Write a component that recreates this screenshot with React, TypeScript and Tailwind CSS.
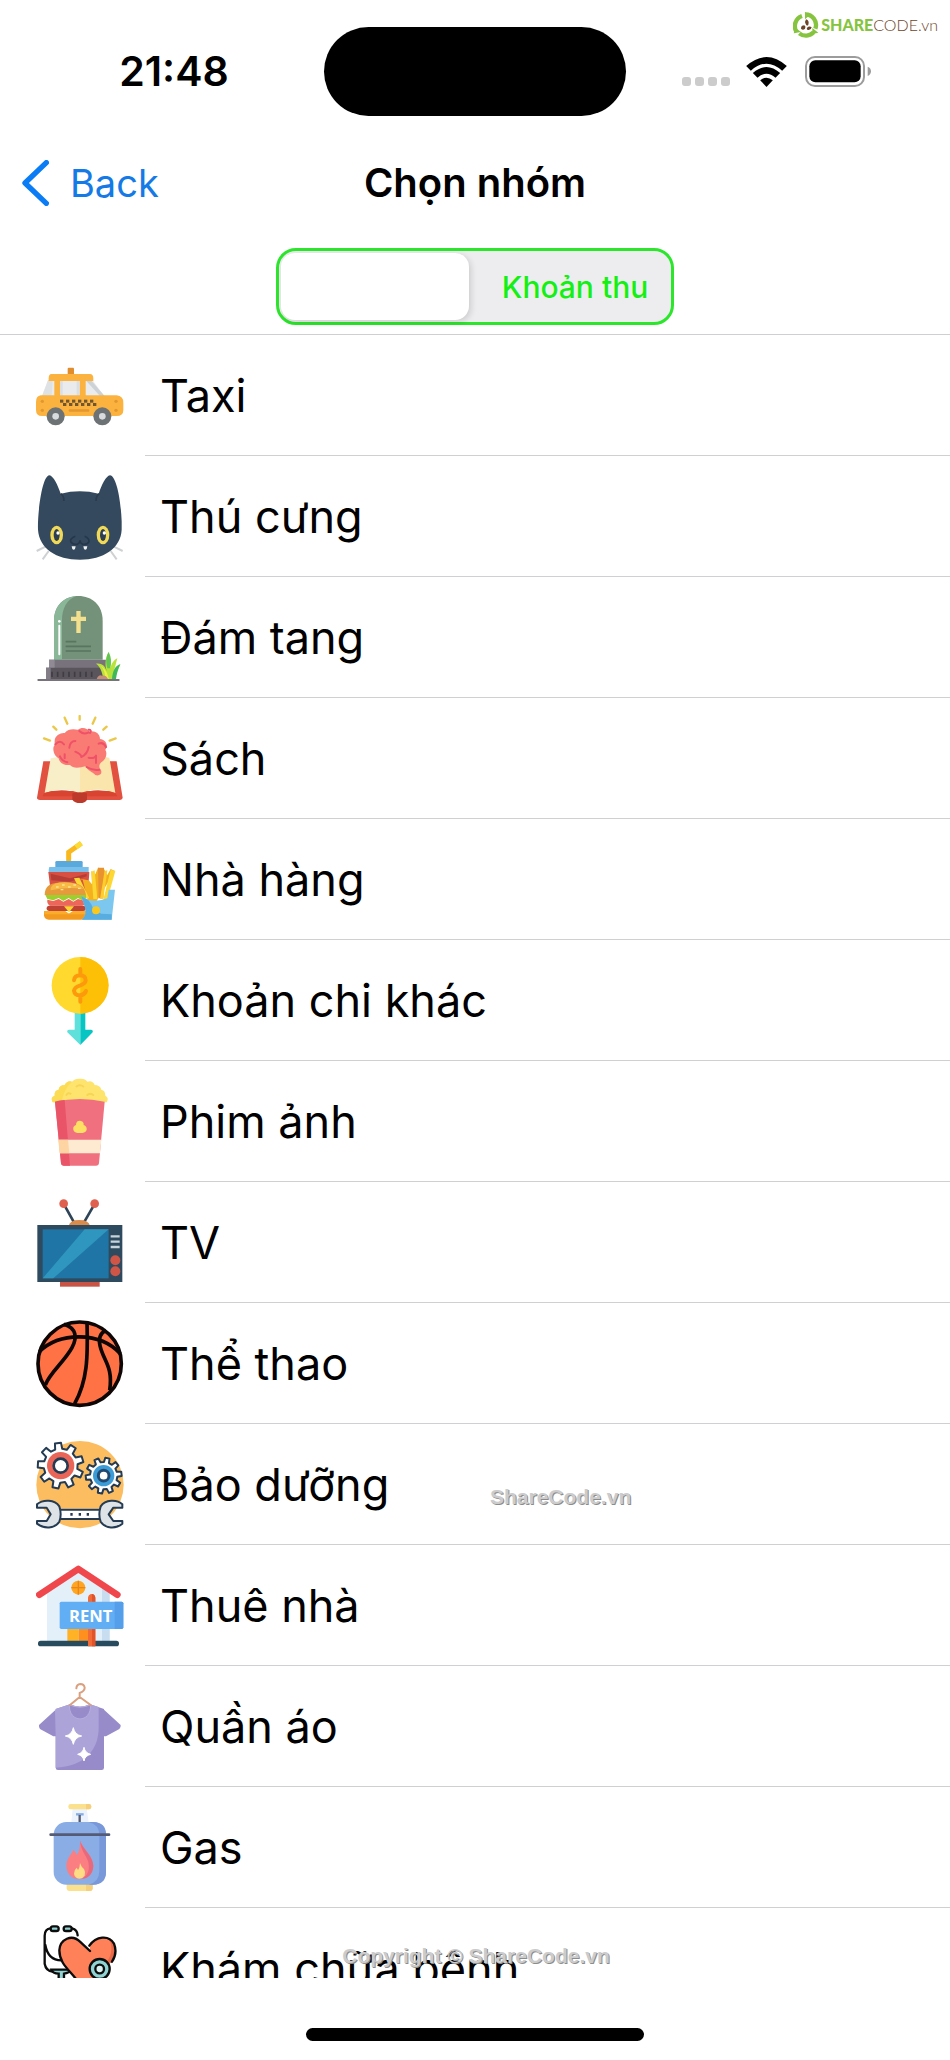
import React, { type ReactNode } from "react";

function gearPath(cx: number, cy: number, outer: number, inner: number, teeth: number, turn: number) {
  const step = (Math.PI * 2) / teeth;
  const points: string[] = [];
  for (let i = 0; i < teeth; i++) {
    const mid = turn + i * step;
    const corners: [number, number][] = [
      [inner, -0.3],
      [outer, -0.19],
      [outer, 0.19],
      [inner, 0.3],
    ];
    for (const [r, f] of corners) {
      const a = mid + f * step;
      points.push(`${(cx + r * Math.cos(a)).toFixed(1)} ${(cy + r * Math.sin(a)).toFixed(1)}`);
    }
  }
  return `M${points.join("L")}Z`;
}

function Icon({ box, children }: { box: string; children: ReactNode }) {
  return (
    <svg viewBox={box} className="size-[88px] shrink-0" aria-hidden="true">
      {children}
    </svg>
  );
}

const Taxi = () => (
  <Icon box="48 33 264 264">
    <rect x="143" y="80" width="19" height="24" rx="3" fill="#e08e2d" />
    <path d="M66 165L84 118H218L252 165Z" fill="#e9ebec" />
    <path d="M84 118L98 118L95 165H66Z" fill="#dfe2e5" />
    <path d="M197 118h16l41 47h-14z" fill="#cdd2d6" />
    <path d="M94 99h116q10 0 10 14v7H86v-7q0-14 8-14z" fill="#fbb23f" />
    <path d="M103 112h17v54h-17zM179 112h18v54h-18z" fill="#fbb23f" />
    <path d="M120 120h8v44h-8zM170 120h9v44h-9z" fill="#dcdfe2" />
    <path d="M62 163H290q20 2 20 22v22q0 18-20 18H66q-18 0-18-18v-24q0-18 14-20z" fill="#fbb23f" />
    <g fill="#e3972f">
      <circle cx="67" cy="181" r="5" />
      <circle cx="67" cy="208" r="5" />
      <circle cx="288" cy="181" r="5" />
      <circle cx="288" cy="208" r="5" />
      <rect x="146" y="205" width="62" height="7" rx="3" />
    </g>
    <g fill="#6f5630">
      {[120, 138, 156, 174, 192, 210].map((x) => (
        <rect key={x} x={x} y="176" width="10" height="9" />
      ))}
      {[129, 147, 165, 183, 201, 219].map((x) => (
        <rect key={x} x={x} y="186" width="10" height="9" />
      ))}
    </g>
    {[107, 247].map((x) => (
      <g key={x}>
        <circle cx={x} cy="226" r="27" fill="#6d7275" />
        <circle cx={x} cy="226" r="10" fill="#d9dcde" />
      </g>
    ))}
  </Icon>
);

const Cat = () => (
  <Icon box="48 396 264 264">
    <path d="M78 616L50 630M86 630L68 655M280 616L308 630M272 630L290 655" stroke="#cfd1d2" strokeWidth="6" />
    <path
      d="M88 403C100 404 114 434 122 458Q180 444 236 458C244 434 258 404 270 403C288 404 302 470 305 540V566C302 622 250 656 180 656C108 656 58 622 54 566C52 520 66 404 88 403Z"
      fill="#34495e"
    />
    <path d="M122 458Q132 464 132 480M238 458Q228 464 228 480" stroke="#2a3b4d" strokeWidth="5" fill="none" />
    <path d="M166 586Q150 592 152 602Q158 612 172 610Q180 606 180 598Q180 606 188 610Q202 612 207 602Q208 592 194 586" stroke="#26374a" strokeWidth="5" fill="none" />
    {[110, 249].map((x) => (
      <g key={x}>
        <ellipse cx={x} cy="582" rx="19" ry="28" fill="#f0da58" />
        <ellipse cx={x} cy="582" rx="9" ry="18" fill="#2c3e50" />
        <circle cx={x + 4} cy="576" r="5" fill="#fff" />
      </g>
    ))}
    <path d="M155 616h12l-2 8q-4 5-8 0zM190 616h12l-2 8q-4 5-8 0z" fill="#eef0f1" />
  </Icon>
);

const Grave = () => (
  <Icon box="48 39 264 264">
    <path d="M102 236V120C102 72 134 45 175 45S248 72 248 120V236Z" fill="#739279" />
    <path d="M102 236V120C102 74 132 47 170 45C140 54 126 84 126 118V236Z" fill="#8ab798" />
    <path d="M118 134V220" stroke="#fff" strokeWidth="6" strokeLinecap="round" />
    <circle cx="118" cy="121" r="4" fill="#fff" />
    <path d="M169 90h13v17h16v13h-16v36h-13v-36h-16v-13h16z" fill="#f3e08f" />
    <path d="M137 182h32M137 196h76M137 210h76" stroke="#58755f" strokeWidth="5" />
    <path d="M87 236H262V262H87Z" fill="#77727b" />
    <path d="M87 236H104V262H87Z" fill="#8f8a93" />
    <path d="M78 260H272V296H78Z" fill="#5a555d" />
    <path d="M78 260H92V296H78Z" fill="#827d87" />
    <path d="M96 272v16M113 272v16M130 272v16M147 272v16M164 272v16M181 272v16M198 272v16M215 272v16" stroke="#403c43" strokeWidth="5" />
    <path d="M55 297H296" stroke="#77727b" strokeWidth="6" strokeLinecap="round" />
    <path d="M250 294C246 270 240 256 228 248C246 246 256 256 260 270C254 250 256 230 266 213C274 232 274 250 270 268C274 248 280 238 292 232C288 248 284 262 282 272C286 260 292 252 301 250C294 266 288 282 284 294Z" fill="#b9e23a" />
    <path d="M262 262C256 240 258 226 266 213C274 228 275 246 270 262Z" fill="#62c554" />
    <path d="M276 294C278 270 286 254 301 250C294 264 290 280 288 294Z" fill="#3fb85c" />
    <path d="M256 294C256 274 250 262 242 254C256 262 264 278 266 294Z" fill="#f0ef48" />
    <path d="M230 294Q236 280 246 284Q258 282 264 294Z" fill="#c58e78" />
  </Icon>
);

const Book = () => (
  <Icon box="48 402 264 264">
    <path d="M72 472L90 479M100 437L109 446M134 410L142 428M179 405V416M226 410L218 428M260 437L250 446M287 472L269 479" stroke="#ebc84a" strokeWidth="7" strokeLinecap="round" />
    <path d="M70 541H94L90 630H270L266 541H290L308 650Q308 656 300 657H60Q51 656 51 650Z" fill="#e2503f" />
    <path d="M92 532Q140 520 180 552V638Q130 614 74 636Z" fill="#f8efc9" />
    <path d="M268 530Q220 520 180 552V638Q230 614 286 636Z" fill="#fae6ac" />
    <path d="M72 636Q130 618 180 638Q230 618 286 636L292 646H68Z" fill="#d8442f" />
    <path d="M157 637Q180 630 201 637V656Q196 666 180 666T157 656Z" fill="#bd3a2b" />
    <path
      d="M104 480C104 462 124 454 134 456C144 442 162 444 174 446C184 438 202 440 208 452C224 448 240 458 240 474C258 476 266 494 256 506C264 520 256 536 244 544C236 552 236 558 243 568C248 580 236 586 226 582C216 572 204 570 196 556C180 560 160 564 150 552C132 554 118 546 116 532C100 524 96 500 104 492Z"
      fill="#fa7b74"
    />
    <path
      d="M106 490Q120 474 132 490M148 500Q150 480 166 480M178 450Q190 462 206 454M210 456Q216 446 206 446M166 512Q184 520 184 528M184 528Q202 520 206 498M120 526Q126 540 142 544M206 530Q222 534 228 524M228 524V546M236 488Q250 482 258 498M200 558Q220 570 238 566M134 520V532"
      stroke="#ef5168"
      strokeWidth="6"
      fill="none"
      strokeLinecap="round"
    />
  </Icon>
);

const Burger = () => (
  <Icon box="48 45 264 264">
    <path d="M146 124V94L184 67" stroke="#f9b81c" strokeWidth="15" fill="none" />
    <path d="M168 79L184 67" stroke="#fddb35" strokeWidth="15" />
    <rect x="106" y="120" width="82" height="20" rx="4" fill="#5aa9dd" />
    <path d="M88 138H206V154H86Q86 142 88 138Z" fill="#79bfec" />
    <path d="M85 153H208L204 210H92Z" fill="#d84f43" />
    <path d="M92 158L150 172L200 158V166L150 182L94 178Z" fill="#b63d36" />
    <path d="M160 170L188 176L204 240H230L285 150L272 144L262 162L252 144L234 140L226 160L214 150L216 190L206 178Z" fill="#f4b01e" />
    <path d="M162 172L178 170L208 232H192ZM214 152L224 148L232 234H220ZM272 146L286 150L262 236H250Z" fill="#fdd835" />
    <path d="M234 140H252L250 232H236Z" fill="#e8932f" />
    <path d="M254 150L262 148L250 234H240Z" fill="#ffce2b" />
    <path d="M74 222C74 194 92 184 134 184S194 194 198 222Z" fill="#e79a3c" />
    <path d="M92 200Q100 184 134 184Q176 184 190 204Q150 196 92 208Z" fill="#f6ba45" />
    <path d="M108 198h8M126 192h8M144 198h8M160 192h8M174 202h8M122 206h8" stroke="#fbe38c" strokeWidth="4" />
    <path d="M76 222H198V230L186 238L174 231L160 240L146 231L130 240L116 231L100 238L82 234Z" fill="#9bd02f" />
    <path d="M82 236L100 240L116 234L130 242L146 234L160 242L174 234L196 240Q196 254 186 254H90Q80 248 82 236Z" fill="#ef6558" />
    <rect x="80" y="254" width="118" height="16" rx="8" fill="#c04235" />
    <path d="M132 256H162L147 274Z" fill="#ffd42e" />
    <path d="M72 270H134L147 278L160 270H198V286Q194 296 184 296H86Q74 294 72 284Z" fill="#f39a1e" />
    <path d="M72 270H134L147 278L160 270H196V280H74Z" fill="#f9ad28" />
    <path d="M184 226L204 236Q232 244 262 232L266 206H285L275 296H186Q200 284 196 262Z" fill="#7cc7ef" />
    <path d="M184 226L204 236L214 250Q220 272 244 278L275 280V296H186Q200 284 196 262Z" fill="#58ade0" />
    <circle cx="228" cy="268" r="12" fill="#fbc81e" />
  </Icon>
);

const Coin = () => (
  <Icon box="48 408 264 264">
    <path d="M164 570H181V672L142 634Q140 625 148 626H164Z" fill="#5fe0da" />
    <path d="M196 570H181V672L218 634Q220 625 212 626H196Z" fill="#07c5c2" />
    <circle cx="180" cy="493" r="85" fill="#ffd92e" />
    <path d="M181 408A85 85 0 0 1 181 578Z" fill="#fec006" />
    <path d="M181 444V462M181 524V542M162 478Q164 463 180 463Q197 464 197 478Q196 488 181 493Q164 498 162 509Q164 523 180 523Q194 522 198 510" stroke="#fd9a0c" strokeWidth="12" fill="none" strokeLinecap="round" />
  </Icon>
);

const Popcorn = () => (
  <Icon box="48 51 264 264">
    <path d="M98 124Q90 108 104 104Q102 88 116 86Q118 72 134 72Q142 58 156 62Q164 52 180 53Q196 52 202 62Q218 58 224 72Q240 72 244 86Q256 88 256 104Q268 110 260 124Z" fill="#fee46c" />
    <path d="M98 124Q90 108 104 104Q102 88 116 86Q118 72 134 72Q142 58 156 62Q132 84 124 124Z" fill="#fddc55" />
    <path d="M168 78Q178 68 192 78M200 104Q210 92 222 104M138 104Q144 92 154 100" stroke="#f6d557" strokeWidth="6" fill="none" />
    <path d="M105 122Q180 106 254 122L237 306Q236 314 228 314H132Q124 314 123 306Z" fill="#f0707f" />
    <path d="M105 122Q118 118 134 117L150 314H132Q124 314 123 306Z" fill="#e95468" />
    <path d="M115 236H244L240 277H119Z" fill="#feead0" />
    <path d="M115 236H144L148 277H119Z" fill="#fed5a2" />
    <path d="M168 192Q168 179 180 179Q192 180 191 192Q201 196 200 206Q198 216 180 216T160 206Q158 196 168 192Z" fill="#fddf63" />
  </Icon>
);

const Television = () => (
  <Icon box="48 414 264 264">
    <path d="M134 434L162 484M221 434L192 484" stroke="#2f4557" strokeWidth="8" />
    <circle cx="131" cy="428" r="13" fill="#e0604f" />
    <circle cx="224" cy="428" r="13" fill="#e0604f" />
    <path d="M146 494Q150 477 178 477T210 494Z" fill="#d98b4b" />
    <rect x="120" y="660" width="119" height="17" fill="#c85446" />
    <rect x="52" y="492" width="255" height="171" fill="#2e4a5e" />
    <rect x="68" y="505" width="198" height="147" fill="#1f75a5" />
    <path d="M194 505H266L100 652H68Z" fill="#2f96bf" />
    <path d="M272 526h27M272 542h27M272 558h27" stroke="#c9d3da" strokeWidth="7" />
    <circle cx="286" cy="598" r="15" fill="#cf5646" />
    <circle cx="286" cy="631" r="15" fill="#cf5646" />
  </Icon>
);

const Basketball = () => (
  <Icon box="48 57 264 264">
    <circle cx="179" cy="188" r="125" fill="#ff7245" stroke="#0d0604" strokeWidth="11" />
    <g fill="none" stroke="#0d0604" strokeWidth="11">
      <path d="M58 152C120 92 240 92 301 158" />
      <path d="M132 70C170 82 172 110 156 140C132 184 90 214 76 252" />
      <path d="M201 64C204 170 202 240 164 308" />
      <path d="M258 88C236 98 236 116 240 134C250 180 280 196 269 268" />
    </g>
  </Icon>
);

const Maintenance = () => (
  <Icon box="48 420 264 264">
    <circle cx="180" cy="551" r="131" fill="#fbbd60" />
    <path d={gearPath(122, 494, 69, 51, 9, -1.69)} fill="#fff" stroke="#243b53" strokeWidth="6" strokeLinejoin="round" />
    <circle cx="122" cy="494" r="41" fill="#e96557" />
    <circle cx="122" cy="494" r="21" fill="#fff" stroke="#243b53" strokeWidth="8" />
    <path d={gearPath(251, 524, 54, 41, 10, -1.36)} fill="#fff" stroke="#243b53" strokeWidth="6" strokeLinejoin="round" />
    <circle cx="251" cy="524" r="32" fill="#3d9bd5" />
    <circle cx="251" cy="524" r="16" fill="#fff" stroke="#214a72" strokeWidth="9" />
    <path d="M118 623H242V656H118Z" fill="#fff" />
    <path d="M116 626H244M116 654H244" stroke="#243b53" strokeWidth="6" />
    <path d="M51 610C70 594 104 596 118 616Q126 640 118 662C104 684 72 684 51 668V660H80L92 640L80 620H51Z" fill="#dde3e6" stroke="#243b53" strokeWidth="6" strokeLinejoin="round" />
    <path d="M307 610C290 594 256 596 242 616Q234 640 242 662C256 684 288 684 307 668V660H280L266 640L280 620H307Z" fill="#dde3e6" stroke="#243b53" strokeWidth="6" strokeLinejoin="round" />
    <path d="M151 636h7v8h-7zM176 636h7v8h-7zM200 636h7v8h-7z" fill="#243b53" />
  </Icon>
);

const House = () => (
  <Icon box="48 63 264 264">
    <path d="M81 150L175 88L269 150V302H81Z" fill="#e3f0fa" />
    <path d="M246 136L269 150V302H246Z" fill="#c9ddf0" />
    <path d="M58 161L175 84L292 161" stroke="#f0474c" strokeWidth="20" fill="none" strokeLinecap="round" strokeLinejoin="round" />
    <circle cx="175" cy="140" r="21" fill="#ffa51f" />
    <path d="M175 119V161M154 140H196" stroke="#e8851c" strokeWidth="4" />
    <path d="M142 256H176V302H142Z" fill="#ffb226" />
    <path d="M176 256H208V302H176Z" fill="#ff9020" />
    <rect x="54" y="299" width="243" height="17" rx="8" fill="#294b5e" />
    <path d="M204 316V170Q206 159 215 159T226 170V316Z" fill="#f26a35" />
    <path d="M216 159Q225 160 226 170V316H216Z" fill="#e25327" />
    <rect x="119" y="182" width="191" height="82" rx="5" fill="#62aef5" />
    <path d="M284 182H305Q310 182 310 187V259Q310 264 305 264H284Z" fill="#559fea" />
    <text x="212" y="242" textAnchor="middle" fill="#fff" fontFamily="Open Sans, Noto Sans, sans-serif" fontWeight="700" fontSize="50">
      RENT
    </text>
  </Icon>
);

const Shirt = () => (
  <Icon box="48 426 264 264">
    <path d="M107 506L57 552Q56 560 60 564L100 586L108 586ZM252 506L302 552Q303 560 298 564L258 586L250 586Z" fill="#988bc9" />
    <path d="M107 504L150 490Q180 504 210 490L252 504V680Q252 687 245 687H114Q107 687 107 680Z" fill="#988bc9" />
    <path d="M107 504L150 490Q180 504 210 490L236 498V560C236 630 190 676 107 680Z" fill="#aca3d8" />
    <path d="M148 491Q180 506 212 491C214 548 146 548 148 491Z" fill="#988bc9" stroke="#b7aee0" strokeWidth="3" />
    <path d="M150 492L179 468L212 492M179 468V456Q194 450 194 440Q192 429 181 429Q170 430 169 442" stroke="#d99f7f" strokeWidth="6" fill="none" strokeLinecap="round" strokeLinejoin="round" />
    <path d="M160 560Q164 581 185 585Q164 589 160 610Q156 589 136 585Q156 581 160 560ZM192 619Q195 636 212 640Q195 644 192 660Q189 644 173 640Q189 636 192 619Z" fill="#fff" stroke="#fff" strokeWidth="3" strokeLinejoin="round" />
  </Icon>
);

const GasTank = () => (
  <Icon box="48 69 264 264">
    <path d="M158 82H200L206 124H154Z" fill="#edf3fc" />
    <rect x="145" y="69" width="69" height="16" rx="7" fill="#fbe08d" />
    <path d="M198 69H207Q214 70 214 77T207 85H198Z" fill="#f6cf7c" />
    <path d="M168 100H191" stroke="#83aee6" strokeWidth="7" />
    <path d="M179 102V126" stroke="#565a70" strokeWidth="7" />
    <path d="M140 306H218V323Q217 330 210 330H148Q141 330 140 323Z" fill="#fbe08d" />
    <path d="M198 306H218V323Q217 330 210 330H198Z" fill="#f6cf7c" />
    <rect x="101" y="123" width="157" height="188" rx="38" fill="#8aade6" />
    <path d="M206 123H220Q258 124 258 161V273Q258 310 220 311H206Q238 302 238 270V164Q238 130 206 123Z" fill="#7898da" />
    <path d="M92 161H267" stroke="#555b75" strokeWidth="8" strokeLinecap="round" />
    <path d="M180 179C188 204 220 224 220 256C218 284 200 294 179 294C156 294 140 280 139 254C140 230 154 222 160 206Q168 212 170 222Q182 206 180 179Z" fill="#fb7e83" />
    <path d="M180 179C188 204 220 224 220 256C218 284 200 294 186 293C206 284 210 260 204 240C198 222 184 212 180 179Z" fill="#e8697c" />
    <path d="M180 246Q184 258 192 264Q198 274 194 284Q188 293 178 293Q164 292 162 278Q162 266 170 260Q173 264 174 268Q180 258 180 246Z" fill="#fddc85" />
  </Icon>
);

const Health = () => (
  <Icon box="48 432 264 264">
    <g fill="none" stroke="#0c0c0c" strokeWidth="7" strokeLinecap="round">
      <path d="M92 442Q74 444 74 464V548Q78 570 98 572M76 492Q84 538 124 538M156 442Q172 446 173 463" />
      <rect x="92" y="436" width="24" height="14" rx="7" fill="#8fd3d2" />
      <rect x="131" y="436" width="24" height="14" rx="7" fill="#8fd3d2" />
      <path d="M94 566H152Q148 576 132 578V610H116V578Q98 578 94 566Z" fill="#8fd3d2" />
    </g>
    <path d="M210 510L180 482C156 458 120 474 118 508C118 548 148 566 176 604L200 630L262 556C284 534 290 508 282 488C266 460 230 466 210 492Z" fill="#ff8159" />
    <path d="M264 470C292 482 292 520 272 546L262 540C276 520 280 492 264 470Z" fill="#e96a49" />
    <path d="M210 510L180 482C156 458 120 474 118 508C118 548 148 566 176 604M208 494C228 466 266 460 282 488C290 508 288 524 276 542" fill="none" stroke="#0c0c0c" strokeWidth="7" strokeLinecap="round" />
    <circle cx="239" cy="564" r="30" fill="#8fd3d2" stroke="#0c0c0c" strokeWidth="7" />
    <circle cx="239" cy="564" r="13" fill="#d9f1f0" stroke="#0c0c0c" strokeWidth="7" />
  </Icon>
);

const groups: { name: string; icon: () => ReactNode }[] = [
  { name: "Taxi", icon: Taxi },
  { name: "Thú cưng", icon: Cat },
  { name: "Đám tang", icon: Grave },
  { name: "Sách", icon: Book },
  { name: "Nhà hàng", icon: Burger },
  { name: "Khoản chi khác", icon: Coin },
  { name: "Phim ảnh", icon: Popcorn },
  { name: "TV", icon: Television },
  { name: "Thể thao", icon: Basketball },
  { name: "Bảo dưỡng", icon: Maintenance },
  { name: "Thuê nhà", icon: House },
  { name: "Quần áo", icon: Shirt },
  { name: "Gas", icon: GasTank },
  { name: "Khám chữa bệnh", icon: Health },
];

function BrandLogo() {
  return (
    <div className="absolute top-3 right-3 flex items-center gap-0.5 font-['Lato',sans-serif] text-[16px] leading-6">
      <svg viewBox="0 0 78 78" className="size-[26px]" aria-hidden="true">
        <g fill="none" stroke="#86c440" strokeWidth="13">
          <path d="M36 7A32 32 0 0 1 67 50" />
          <path d="M62 61A32 32 0 0 1 19 64" />
          <path d="M11 60A32 32 0 0 1 27 12" />
        </g>
        <path d="M36 0L50 10L36 22ZM76 62L58 66L58 48ZM2 64L8 48L24 60Z" fill="#86c440" />
        <path d="M39 22Q50 26 46 38Q42 44 38 36Q34 30 39 22ZM56 46Q54 56 44 54Q38 48 46 44Q52 42 56 46ZM24 50Q24 40 34 40Q40 44 36 50Q30 56 24 50Z" fill="#6d4526" />
      </svg>
      <span>
        <span className="font-black text-[#86c440]">SHARE</span>
        <span className="font-light text-[#6d4526]">CODE.vn</span>
      </span>
    </div>
  );
}

function StatusBar() {
  return (
    <div className="grid grid-cols-[1fr_302px_1fr] items-center pt-[27px]">
      <div className="pl-6 text-center text-[41px] leading-none font-semibold">21:48</div>
      <div className="h-[89px] rounded-full bg-black" />
      <div className="flex items-center pl-14">
        <div className="flex gap-1 pt-5">
          <span className="size-[9px] rounded-[3px] bg-[#cccccc]" />
          <span className="size-[9px] rounded-[3px] bg-[#cccccc]" />
          <span className="size-[9px] rounded-[3px] bg-[#cccccc]" />
          <span className="size-[9px] rounded-[3px] bg-[#cccccc]" />
        </div>
        <svg viewBox="0 0 122 90" className="ml-4 h-[30px] w-[41px]" aria-hidden="true">
          <path d="M0 27Q61-27 122 27L108 41Q61-1 14 41Z" />
          <path d="M20 48Q61 12 102 48L88 62Q61 38 34 62Z" />
          <path d="M42 70Q61 54 80 70L61 90Z" />
        </svg>
        <svg viewBox="0 0 198 93" className="ml-[18px] h-[31px] w-[66px]" aria-hidden="true">
          <rect x="3" y="3" width="174" height="87" rx="27" fill="none" stroke="#9c9c9c" strokeWidth="6" />
          <rect x="13" y="13" width="154" height="66" rx="18" />
          <path d="M188 32Q198 36 198 46T188 60Z" fill="#9c9c9c" />
        </svg>
      </div>
    </div>
  );
}

export default function App() {
  return (
    <div className="relative flex h-screen flex-col overflow-hidden bg-white font-['Inter','Noto_Sans',sans-serif] text-black">
      <header className="border-b border-[#cfcfd1] pb-[9px]">
        <StatusBar />
        <nav className="grid h-[132px] grid-cols-[1fr_auto_1fr] items-center pt-[2px]">
          <a href="#back" className="flex items-center gap-[21px] pl-[22px] text-[38px] leading-none text-[#157ae6]">
            <svg viewBox="0 0 81 138" className="h-[46px] w-[27px]" fill="none" stroke="#0a7cf5" strokeWidth="16" strokeLinecap="round" strokeLinejoin="round" aria-hidden="true">
              <path d="M73 8L9 69L73 130" />
            </svg>
            Back
          </a>
          <h1 className="text-[40px] leading-none font-semibold">Chọn nhóm</h1>
        </nav>
        <div role="tablist" className="mx-auto grid h-[77px] w-[398px] grid-cols-[188px_1fr] rounded-[20px] border-[3px] border-[#2ce62c] bg-[#ededef] p-[2px]">
          <button role="tab" aria-selected="true" aria-label="Khoản chi" className="rounded-[14px] bg-white shadow-[2px_2px_6px_rgba(0,0,0,0.14)]" />
          <button role="tab" aria-selected="false" className="pl-3 text-[30px] leading-none font-medium text-[#14f014]">
            Khoản thu
          </button>
        </div>
      </header>

      <main className="min-h-0 flex-1 overflow-y-auto [scrollbar-width:none]">
        <ul>
          {groups.map(({ name, icon: GroupIcon }) => (
            <li key={name} className="flex items-center gap-[21px] pl-9">
              <GroupIcon />
              <div className="flex h-[121px] flex-1 items-center border-b border-[#d0d0d2] pl-[15px] text-[45px] leading-none">
                {name}
              </div>
            </li>
          ))}
        </ul>
      </main>

      <footer className="flex h-[82px] shrink-0 items-end justify-center pb-[19px]">
        <div className="h-[13px] w-[338px] rounded-full bg-black" />
      </footer>

      <BrandLogo />
      <div className="pointer-events-none absolute top-[1485px] left-[490px] font-['Liberation_Sans',sans-serif] text-[21px] leading-6 font-bold text-[#cccccc] [text-shadow:1px_1px_0_#8c8c8c]">
        ShareCode.vn
      </div>
      <div className="pointer-events-none absolute inset-x-0 bottom-[92px] pl-0.5 text-center font-['Liberation_Sans',sans-serif] text-[21px] leading-6 font-bold text-[#cccccc] [text-shadow:1px_1px_0_#8c8c8c]">
        Copyright © ShareCode.vn
      </div>
    </div>
  );
}
